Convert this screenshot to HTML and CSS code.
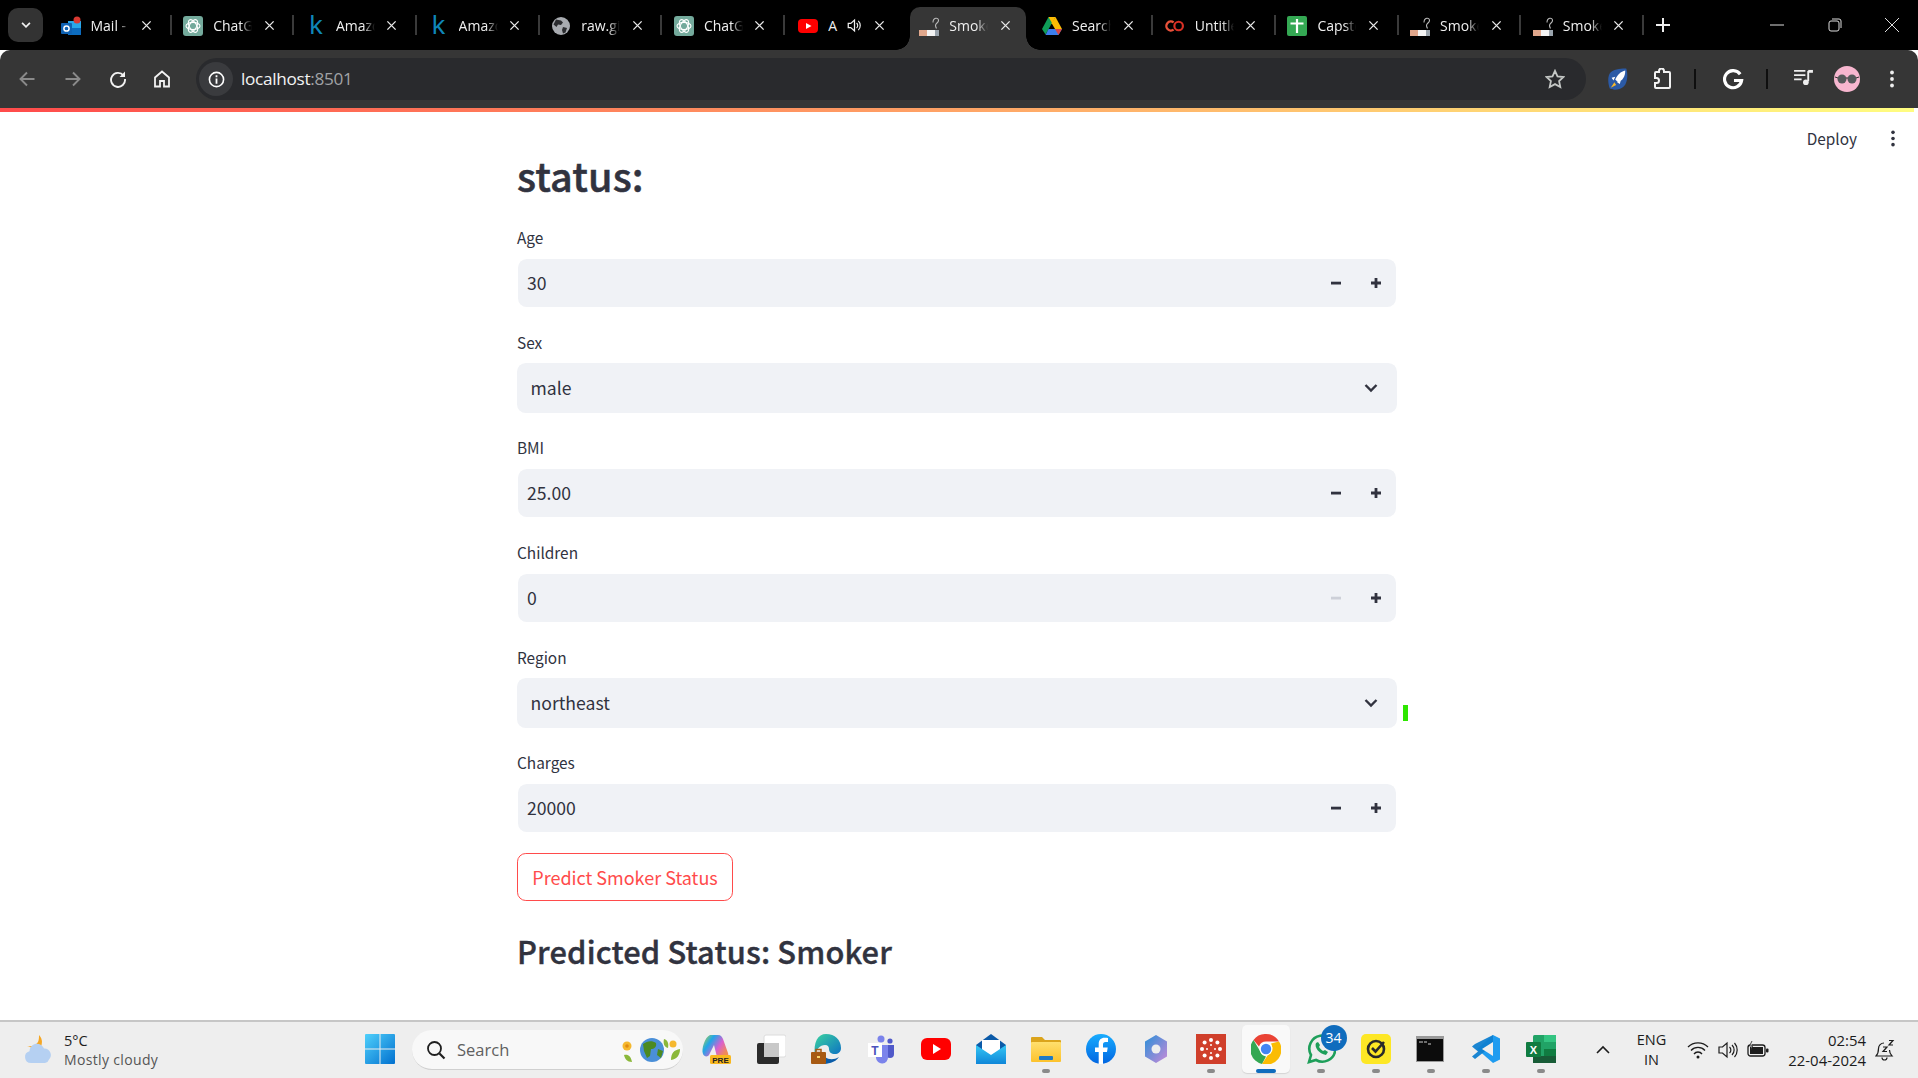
FILE: index.html
```html
<!DOCTYPE html>
<html lang="en">
<head>
<meta charset="utf-8">
<title>Smoker status</title>
<link rel="stylesheet" href="styles.css">
</head>
<body>
<svg class="defs" aria-hidden="true">
  <defs>
    <linearGradient id="winG" x1="0" y1="0" x2="1" y2="1"><stop offset="0" stop-color="#4fd0fb"/><stop offset="1" stop-color="#0270cf"/></linearGradient>
    <linearGradient id="edgeG" x1="0" y1="0" x2="1" y2="1"><stop offset="0" stop-color="#3ad3a0"/><stop offset="1" stop-color="#0c6fc4"/></linearGradient>
    <linearGradient id="mailG" x1="0" y1="0" x2="0" y2="1"><stop offset="0" stop-color="#35c8f5"/><stop offset="1" stop-color="#0f86d8"/></linearGradient>
    <linearGradient id="folderG" x1="0" y1="0" x2="0" y2="1"><stop offset="0" stop-color="#ffdf6e"/><stop offset="1" stop-color="#fcc22c"/></linearGradient>
    <linearGradient id="fbG" x1="0" y1="0" x2="0" y2="1"><stop offset="0" stop-color="#18acfe"/><stop offset="1" stop-color="#0165e1"/></linearGradient>
    <linearGradient id="coG" x1="0" y1="0" x2="1" y2="0.600"><stop offset="0" stop-color="#c4d832"/><stop offset=".35" stop-color="#1fa6e8"/><stop offset=".7" stop-color="#d95fd0"/><stop offset="1" stop-color="#f08a5a"/></linearGradient>
    <linearGradient id="m365G" x1="0" y1="0" x2="1" y2="1"><stop offset="0" stop-color="#2a8fd8"/><stop offset="1" stop-color="#c88ad8"/></linearGradient>
    <symbol id="i-close" viewBox="0 0 12 12"><path d="M1.5 1.5l9 9M10.500 1.500l-9 9" stroke="#e8e8e8" stroke-width="1.500" fill="none"/></symbol>
    <symbol id="i-outlook" viewBox="0 0 20 20"><rect x="7" y="5" width="13" height="14" fill="#28a8ea"/><rect x="7" y="12" width="13" height="7" fill="#0c6cbf"/><rect x="0" y="7" width="11" height="11" rx="1" fill="#0f62b3"/><circle cx="5.500" cy="12.500" r="2.600" fill="none" stroke="#fff" stroke-width="1.500"/><circle cx="16" cy="4" r="3.500" fill="#d93a32"/></symbol>
    <symbol id="i-gpt" viewBox="0 0 20 20"><rect width="20" height="20" rx="3" fill="#74aa9c"/><g fill="none" stroke="#fff" stroke-width="1.100"><ellipse cx="10" cy="10" rx="7" ry="3.600"/><ellipse cx="10" cy="10" rx="7" ry="3.600" transform="rotate(60 10 10)"/><ellipse cx="10" cy="10" rx="7" ry="3.600" transform="rotate(120 10 10)"/></g></symbol>
    <symbol id="i-globe" viewBox="0 0 20 20"><circle cx="10" cy="10" r="9" fill="#a8abb0"/><path d="M5 3.500l5 1 2 2-2 2.500-3-.5-1.500 2.500-3-2.500zM12 11l4 1-1.500 4.500-2.500 1-1-3.500z" fill="#2b2c2f"/></symbol>
    <symbol id="i-yt" viewBox="0 0 20 20"><rect y="3" width="20" height="14" rx="4" fill="#f00"/><path d="M8 7l5.500 3L8 13z" fill="#fff"/></symbol>
    <symbol id="i-speaker" viewBox="0 0 18 18"><path d="M1.500 6.500h3L9 2.500v13l-4.500-4h-3z" fill="none" stroke="#eee" stroke-width="1.500"/><path d="M11.500 6a4 4 0 010 6M13.500 3.500a7.500 7.500 0 010 11" fill="none" stroke="#eee" stroke-width="1.400"/></symbol>
    <symbol id="i-smoke" viewBox="0 0 20 20"><rect x="0" y="14" width="8" height="6" fill="#e0a78c"/><rect x="8" y="14" width="8" height="6" fill="#f3f3f3"/><rect x="16" y="14" width="4" height="6" fill="#9aa4ad"/><path d="M14 6.500c0-5 5.500-5.500 5.500-2 0 2.500-3 2.500-3 5 0 1 .500 2 1 3" fill="none" stroke="#b9b9b9" stroke-width="1.100"/></symbol>
    <symbol id="i-drive" viewBox="0 0 20 18"><path d="M6.500 0h7l-3.500 7-3.500-1z" fill="#fbbc04"/><path d="M6.500 0L0 12l3.500 5.500L10 6z" fill="#0f9d58"/><path d="M13.500 0L20 12h-7L9.500 6z" fill="#fbbc04"/><path d="M6.500 12H20l-3.500 6H3.500z" fill="#3d7fee"/><path d="M13 12h7l-3.500 6z" fill="#ea4335" opacity=".9"/></symbol>
    <symbol id="i-colab" viewBox="0 0 22 18"><path d="M9.500 5a5 5 0 100 8" fill="none" stroke="#e8513a" stroke-width="2.600"/><circle cx="15" cy="9" r="4.700" fill="none" stroke="#d93025" stroke-width="2.400"/></symbol>
    <symbol id="i-sheets" viewBox="0 0 20 20"><rect width="20" height="20" rx="2" fill="#34a853"/><path d="M3.500 7.500h13M10 3v14" stroke="#fff" stroke-width="2.200"/></symbol>
    <symbol id="i-more" viewBox="0 0 4 18"><circle cx="2" cy="2.500" r="1.900"/><circle cx="2" cy="9" r="1.900"/><circle cx="2" cy="15.500" r="1.900"/></symbol>
    <symbol id="i-minus" viewBox="0 0 12 12"><rect x="1" y="4.700" width="10" height="2.800"/></symbol>
    <symbol id="i-plus" viewBox="0 0 12 12"><path d="M1 6h10M6 1v10" stroke="currentColor" stroke-width="2.800" fill="none"/></symbol>
    <symbol id="i-chev" viewBox="0 0 14 10"><path d="M1.500 2l5.500 5.500L12.500 2" stroke="currentColor" stroke-width="2.400" fill="none"/></symbol>
    <symbol id="i-folder" viewBox="0 0 30 30"><path d="M0 4a1 1 0 011-1h10l3 3h15a1 1 0 011 1v5H0z" fill="#dba41c"/><rect y="8" width="30" height="20" rx="1" fill="url(#folderG)"/><rect x="8" y="22" width="14" height="4" rx="1" fill="#1f7ac4"/></symbol>
  </defs>
</svg>

<div class="page">
  <header class="tabstrip">
    <button class="tab-search"><svg class="ico10" viewBox="0 0 14 10"><use href="#i-chev"/></svg></button>
    <div class="tab sep"><svg class="fav"><use href="#i-outlook"/></svg><span class="tab-title">Mail - Outlook</span><svg class="tab-x"><use href="#i-close"/></svg></div>
    <div class="tab sep"><svg class="fav"><use href="#i-gpt"/></svg><span class="tab-title">ChatGPT</span><svg class="tab-x"><use href="#i-close"/></svg></div>
    <div class="tab sep"><span class="fav kaggle">k</span><span class="tab-title">Amazon</span><svg class="tab-x"><use href="#i-close"/></svg></div>
    <div class="tab sep"><span class="fav kaggle">k</span><span class="tab-title">Amazon</span><svg class="tab-x"><use href="#i-close"/></svg></div>
    <div class="tab sep"><svg class="fav"><use href="#i-globe"/></svg><span class="tab-title">raw.githubusercontent</span><svg class="tab-x"><use href="#i-close"/></svg></div>
    <div class="tab sep"><svg class="fav"><use href="#i-gpt"/></svg><span class="tab-title">ChatGPT</span><svg class="tab-x"><use href="#i-close"/></svg></div>
    <div class="tab tab-audio"><svg class="fav"><use href="#i-yt"/></svg><span class="tab-title tab-title-short">A</span><svg class="tab-sound"><use href="#i-speaker"/></svg><svg class="tab-x"><use href="#i-close"/></svg></div>
    <div class="tab active"><svg class="fav"><use href="#i-smoke"/></svg><span class="tab-title">Smoker</span><svg class="tab-x"><use href="#i-close"/></svg></div>
    <div class="tab sep"><svg class="fav"><use href="#i-drive"/></svg><span class="tab-title">Search</span><svg class="tab-x"><use href="#i-close"/></svg></div>
    <div class="tab sep"><svg class="fav"><use href="#i-colab"/></svg><span class="tab-title">Untitled</span><svg class="tab-x"><use href="#i-close"/></svg></div>
    <div class="tab sep"><svg class="fav"><use href="#i-sheets"/></svg><span class="tab-title">Capstone</span><svg class="tab-x"><use href="#i-close"/></svg></div>
    <div class="tab sep"><svg class="fav"><use href="#i-smoke"/></svg><span class="tab-title">Smoker</span><svg class="tab-x"><use href="#i-close"/></svg></div>
    <div class="tab sep"><svg class="fav"><use href="#i-smoke"/></svg><span class="tab-title">Smoker</span><svg class="tab-x"><use href="#i-close"/></svg></div>
    <svg class="newtab" viewBox="0 0 14 14"><path d="M7 0v14M0 7h14" stroke="#eee" stroke-width="2" fill="none"/></svg>
    <div class="win-controls">
      <svg class="win-btn" viewBox="0 0 14 14"><path d="M0 7h14" stroke="#ddd" fill="none"/></svg>
      <svg class="win-btn" viewBox="0 0 14 14"><rect x="1" y="3" width="10" height="10" rx="2" fill="none" stroke="#ddd"/><path d="M4 1h7a2 2 0 012 2v7" fill="none" stroke="#ddd"/></svg>
      <svg class="win-btn" viewBox="0 0 14 14"><path d="M0 0l14 14M14 0L0 14" stroke="#ddd" fill="none"/></svg>
    </div>
  </header>

  <nav class="toolbar">
    <svg class="tool t-back" viewBox="0 0 18 18"><path d="M16.500 9H2.500M9 2.500L2.500 9 9 15.500" fill="none" stroke="#8a8a8a" stroke-width="1.900"/></svg>
    <svg class="tool t-fwd" viewBox="0 0 18 18"><path d="M1.500 9h14M9 2.500L15.500 9 9 15.500" fill="none" stroke="#8a8a8a" stroke-width="1.900"/></svg>
    <svg class="tool t-reload" viewBox="0 0 18 18"><path d="M14.500 5.500A7 7 0 1016 9" fill="none" stroke="#f2f2f2" stroke-width="1.900"/><path d="M16 1.500v5.500h-5.500z" fill="#f2f2f2"/></svg>
    <svg class="tool t-home" viewBox="0 0 18 18"><path d="M9 1.500L2 7.500v9h5v-5.500h4v5.500h5v-9z" fill="none" stroke="#f2f2f2" stroke-width="1.800"/></svg>
    <div class="omnibox">
      <span class="chip"><svg viewBox="0 0 18 18" class="chip-ico"><circle cx="9" cy="9" r="7.500" fill="none" stroke="#fff" stroke-width="1.700"/><path d="M9 8v5.500M9 4.500v2" stroke="#fff" stroke-width="1.900"/></svg></span>
      <span class="url">localhost<span class="url-port">:8501</span></span>
      <svg class="star" viewBox="0 0 20 20"><path d="M10 1.800l2.500 5.500 6 .7-4.400 4.100 1.200 6L10 15.100l-5.300 3 1.200-6L1.500 8l6-.7z" fill="none" stroke="#c4c7c5" stroke-width="1.800"/></svg>
    </div>
    <svg class="tool t-rocket" viewBox="0 0 22 24"><path d="M3 4c5-4 13-4 17-4 2 4 2 16-3 20-4 4-12 4-15 2C0 17-1 8 3 4z" fill="#2b5aa6"/><path d="M19 2c-5 1-9 5-11 10l3 3c5-2 8-6 8-13z" fill="#fff"/><path d="M8 9l-4 1 2 3zM14 13l-1 4-3-2z" fill="#fff"/><path d="M7 15l-4 6 6-3z" fill="#f5b82e"/></svg>
    <svg class="tool t-puzzle" viewBox="0 0 20 22"><path d="M7 4V3a2.500 2.500 0 015 0v1h5a1 1 0 011 1v14a1 1 0 01-1 1H4a1 1 0 01-1-1v-4h1.500a2.500 2.500 0 000-5H3V5a1 1 0 011-1z" fill="none" stroke="#f2f2f2" stroke-width="2"/></svg>
    <span class="tool-sep sep-a"></span>
    <svg class="tool t-g" viewBox="0 0 22 22"><path d="M18 5.500A9 9 0 1019.500 12H11.500" fill="none" stroke="#fff" stroke-width="3.300"/></svg>
    <span class="tool-sep sep-b"></span>
    <svg class="tool t-media" viewBox="0 0 20 18"><path d="M0 2h12M0 6.500h12M0 11h8" stroke="#eee" stroke-width="1.900" fill="none"/><path d="M15 2v11" stroke="#eee" stroke-width="2"/><path d="M15 1h5v3h-5z" fill="#eee"/><circle cx="12.500" cy="14" r="3" fill="#eee"/></svg>
    <svg class="t-avatar" viewBox="0 0 26 26"><circle cx="13" cy="13" r="13" fill="#f7b6cf"/><circle cx="8" cy="13" r="4.500" fill="#55585a"/><circle cx="18" cy="13" r="4.500" fill="#55585a"/><path d="M1 11l3 1M25 11l-3 1M12 12h2" stroke="#333" stroke-width="1"/></svg>
    <svg class="tool t-more" viewBox="0 0 4 18" fill="#eee"><use href="#i-more"/></svg>
  </nav>

  <main class="app">
    <div class="app-deco"></div>
    <div class="app-menu">
      <span class="deploy">Deploy</span>
      <svg class="app-more" viewBox="0 0 4 18" fill="#31333f"><use href="#i-more"/></svg>
    </div>
    <span class="resize-mark"></span>
    <section class="col">
      <h2 class="title">status:</h2>

      <div class="field"><label class="lbl">Age</label>
        <div class="ctl"><div class="num"><span class="val">30</span><span class="step"><svg class="ico12"><use href="#i-minus"/></svg></span><span class="step"><svg class="ico12"><use href="#i-plus"/></svg></span></div></div></div>

      <div class="field"><label class="lbl">Sex</label>
        <div class="ctl"><div class="sel"><span class="val">male</span><svg class="chev"><use href="#i-chev"/></svg></div></div></div>

      <div class="field"><label class="lbl">BMI</label>
        <div class="ctl"><div class="num"><span class="val">25.00</span><span class="step"><svg class="ico12"><use href="#i-minus"/></svg></span><span class="step"><svg class="ico12"><use href="#i-plus"/></svg></span></div></div></div>

      <div class="field"><label class="lbl">Children</label>
        <div class="ctl"><div class="num"><span class="val">0</span><span class="step off"><svg class="ico12"><use href="#i-minus"/></svg></span><span class="step"><svg class="ico12"><use href="#i-plus"/></svg></span></div></div></div>

      <div class="field"><label class="lbl">Region</label>
        <div class="ctl"><div class="sel"><span class="val">northeast</span><svg class="chev"><use href="#i-chev"/></svg></div></div></div>

      <div class="field"><label class="lbl">Charges</label>
        <div class="ctl"><div class="num"><span class="val">20000</span><span class="step"><svg class="ico12"><use href="#i-minus"/></svg></span><span class="step"><svg class="ico12"><use href="#i-plus"/></svg></span></div></div></div>

      <button class="predict">Predict Smoker Status</button>
      <h3 class="result">Predicted Status: Smoker</h3>
    </section>
  </main>

  <footer class="taskbar">
    <div class="weather">
      <svg class="wx" viewBox="0 0 32 32"><path d="M15 1a10 10 0 01-1 15L3 12c5 1 9-1 11-4 1-2 1-5 1-7z" fill="#f5a623"/><path d="M7 29a6 6 0 01-1.500-11.800A7.500 7.500 0 0120 14.500a6.500 6.500 0 015 11 5 5 0 01-4 3.500z" fill="#b5d0f2"/></svg>
      <div class="wx-text"><span class="wx-temp">5°C</span><span class="wx-desc">Mostly cloudy</span></div>
    </div>
    <div class="tb"><svg class="tbi" viewBox="0 0 30 30"><path d="M0 1a1 1 0 011-1h13.500v14.500H0zM15.500 0H29a1 1 0 011 1v13.500H15.500zM0 15.500h14.500V30H1a1 1 0 01-1-1zM15.500 15.500H30V29a1 1 0 01-1 1H15.500z" fill="url(#winG)"/></svg></div>
    <div class="searchbox">
      <svg class="sb-glass" viewBox="0 0 20 20"><circle cx="8.500" cy="8.500" r="6.500" fill="none" stroke="#1f1f1f" stroke-width="1.800"/><path d="M13.500 13.500l5 5" stroke="#1f1f1f" stroke-width="2.200"/></svg>
      <span class="sb-text">Search</span>
      <svg class="sb-art" viewBox="0 0 60 30"><circle cx="31" cy="15" r="12" fill="#4a8fd8"/><path d="M22 9c4-3 9-4 13-1 1 4-2 6-5 6l-1 7-3 2-3-7zM37 14l5 2-2 7-4-3z" fill="#4c8a22"/><circle cx="6" cy="11" r="4.500" fill="#f5b82e"/><circle cx="6" cy="11" r="1.800" fill="#e08a12"/><path d="M3 20c4-1 7 1 8 7-5 0-7-3-8-7zM43 4c4 1 5 5 4 9-4-1-5-5-4-9zM50 25c0-7 3-10 9-11 0 6-3 10-9 11z" fill="#8bb83a"/><circle cx="52" cy="9" r="3.500" fill="#f5b82e"/></svg>
    </div>
    <div class="tb"><svg class="tbi" viewBox="0 0 30 30"><path d="M9 1h8c3 0 4 2 5 4l5 14c1 3-1 4-3 4H16l-3-12-5 10c-1 2-5 2-6-1C0 15 4 3 9 1z" fill="url(#coG)"/><rect x="9" y="21" width="21" height="9" rx="1.500" fill="#f9b81f"/><text x="19.500" y="28.500" class="pre">PRE</text></svg></div>
    <div class="tb"><svg class="tbi" viewBox="0 0 30 30"><rect x="8" y="1" width="22" height="22" rx="2" fill="#fff" stroke="#dcdcdc"/><rect x="1" y="9" width="22" height="21" rx="2" fill="#2b2b2b"/><rect x="8" y="9" width="15" height="14" fill="#c8c8c8"/></svg></div>
    <div class="tb"><svg class="tbi" viewBox="0 0 30 30"><path d="M15 0c9 0 15 6 15 14 0 4-3 6-6 6-4 0-6-2-6-5 0-2-1-4-4-4-5 0-9 4-10 11C2 8 7 0 15 0z" fill="url(#edgeG)"/><path d="M12 30c4 0 12-1 16-7-5 3-10 3-14 0z" fill="#0a5ca8"/><rect y="18" width="15" height="12" rx="1" fill="#a75a13"/><rect x="5" y="15.500" width="5" height="3" fill="none" stroke="#a75a13" stroke-width="1.500"/><rect x="6" y="22" width="3" height="2" fill="#f8d36a"/></svg></div>
    <div class="tb"><svg class="tbi" viewBox="0 0 30 30"><circle cx="15" cy="5" r="3.500" fill="#7b83eb"/><circle cx="24" cy="7" r="2.600" fill="#5059c9"/><path d="M20 11h8v9a4 4 0 01-8 0z" fill="#5059c9"/><path d="M9 11h13v12a6 6 0 01-12 1z" fill="#7b83eb"/><rect x="2" y="9" width="14" height="14" fill="#fff"/><text x="9" y="20.500" class="teams">T</text></svg></div>
    <div class="tb"><svg class="tbi" viewBox="0 0 30 30"><rect y="4" width="30" height="22" rx="6" fill="#f00"/><path d="M12 10l8 5-8 5z" fill="#fff"/></svg></div>
    <div class="tb"><svg class="tbi" viewBox="0 0 30 30"><path d="M15 0L30 11v5H0v-5z" fill="#0b5aa8"/><path d="M6 6h18v10l-9 5-9-5z" fill="#fff"/><path d="M0 11l15 10 15-10v19H0z" fill="url(#mailG)"/></svg></div>
    <div class="tb run"><svg class="tbi"><use href="#i-folder"/></svg></div>
    <div class="tb"><svg class="tbi" viewBox="0 0 30 30"><circle cx="15" cy="15" r="15" fill="url(#fbG)"/><path d="M17 30V18h4l.7-4.500H17v-3c0-1.500.7-2.500 2.500-2.500H22V4c-1-.2-2.300-.3-3.500-.3-3.500 0-5.800 2.200-5.800 6v3.800H9V18h3.700v12z" fill="#fff"/></svg></div>
    <div class="tb"><svg class="tbi" viewBox="0 0 30 30"><path d="M15 1l11 6.500v15L15 29 4 22.500v-15z" fill="url(#m365G)"/><circle cx="15" cy="15" r="4.500" fill="#eee"/></svg></div>
    <div class="tb run"><svg class="tbi" viewBox="0 0 30 30"><rect width="30" height="30" fill="#d03f2b"/><g fill="#fff"><circle cx="15" cy="6" r="2"/><circle cx="15" cy="24" r="2"/><circle cx="6" cy="15" r="2"/><circle cx="24" cy="15" r="2"/><circle cx="8.600" cy="8.600" r="2"/><circle cx="21.400" cy="8.600" r="2"/><circle cx="8.600" cy="21.400" r="2"/><circle cx="21.400" cy="21.400" r="2"/><circle cx="15" cy="11" r="1"/><circle cx="15" cy="19" r="1"/><circle cx="11" cy="15" r="1"/><circle cx="19" cy="15" r="1"/></g></svg></div>
    <div class="tb run active-app"><svg class="tbi" viewBox="0 0 30 30"><path d="M15 0a15 15 0 0113 7.500H15a7.500 7.500 0 00-7 5L2.500 6A15 15 0 0115 0z" fill="#ea4335"/><path d="M2.500 6L9 17a7.500 7.500 0 006 5.500L11 30A15 15 0 012.500 6z" fill="#34a853"/><path d="M28 7.500A15 15 0 0111 30l6.500-10A7.500 7.500 0 0020 9.500z" fill="#fbbc04"/><circle cx="15" cy="15" r="6.500" fill="#fff"/><circle cx="15" cy="15" r="5.200" fill="#4285f4"/></svg></div>
    <div class="tb run"><svg class="tbi" viewBox="0 0 30 30"><path d="M3 28l2-7A13 13 0 1110 26z" fill="none" stroke="#1e9f5a" stroke-width="2.600"/><path d="M10 9c-2 4 3 11 10 12l2-3-3-2-2 1c-2-1-3-3-4-4l1-2-2-3z" fill="#1e9f5a"/></svg><span class="badge">34</span></div>
    <div class="tb run"><svg class="tbi" viewBox="0 0 30 30"><rect width="30" height="30" rx="5" fill="#fde725"/><circle cx="15" cy="15" r="8" fill="none" stroke="#2a2a2a" stroke-width="2.600"/><path d="M11 14l3.500 3.500L23 8" fill="none" stroke="#2a2a2a" stroke-width="2.600"/></svg></div>
    <div class="tb run"><svg class="tbi" viewBox="0 0 30 30"><rect y="2" width="28" height="26" fill="#9a9a9a"/><rect x="1" y="5" width="26" height="22" fill="#0c0c0c"/><path d="M3 8h4M8 8h3M12 10h3" stroke="#cfcfcf" fill="none"/></svg></div>
    <div class="tb run"><svg class="tbi" viewBox="0 0 30 30"><path d="M22 1l7 3.500v21L22 29 6 15z" fill="#1f9cf0"/><path d="M4 10L1 12.500l6 5-6 5L4 25l18-14V1z" fill="#0f7fd0" opacity=".95"/><path d="M22 8v14L11 15z" fill="#eeeeee"/></svg></div>
    <div class="tb run"><svg class="tbi" viewBox="0 0 30 30"><rect x="7" y="1" width="23" height="28" rx="1.500" fill="#21a366"/><rect x="18" y="1" width="12" height="7" fill="#33c481"/><rect x="18" y="15" width="12" height="7" fill="#107c41"/><rect x="7" y="22" width="23" height="7" fill="#185c37"/><rect x="0" y="8" width="15" height="15" rx="1" fill="#107c41"/><text x="7.500" y="19.500" class="xl">X</text></svg></div>
    <svg class="tray-chev" viewBox="0 0 14 10"><path d="M1 8l6-6 6 6" fill="none" stroke="#1c1c1c" stroke-width="1.600"/></svg>
    <div class="lang"><span>ENG</span><span>IN</span></div>
    <svg class="t-wifi" viewBox="0 0 22 18"><path d="M1 6a14 14 0 0120 0M4 9.500a9.500 9.500 0 0114 0M7 13a5 5 0 018 0" fill="none" stroke="#1c1c1c" stroke-width="1.300"/><circle cx="11" cy="16" r="1.500" fill="#1c1c1c"/></svg>
    <svg class="t-vol" viewBox="0 0 20 18"><path d="M1 6h3.500L9 2v14l-4.500-4H1z" fill="none" stroke="#1c1c1c" stroke-width="1.200"/><path d="M11.500 6a4 4 0 010 6M14 4a7 7 0 010 10M16.500 2a10.500 10.500 0 010 14" fill="none" stroke="#1c1c1c" stroke-width="1.200"/></svg>
    <svg class="t-bat" viewBox="0 0 22 18"><rect x="1" y="4" width="17" height="11" rx="2.500" fill="none" stroke="#1c1c1c" stroke-width="1.300"/><rect x="3" y="6" width="13" height="7" fill="#1c1c1c"/><rect x="19" y="7.500" width="2.500" height="4" rx="1" fill="#1c1c1c"/><path d="M5 0L2.500 5h3L4 9" fill="#eee" stroke="#1c1c1c" stroke-width=".8"/></svg>
    <div class="clock"><span>02:54</span><span>22-04-2024</span></div>
    <svg class="t-bell" viewBox="0 0 20 22"><path d="M9 4a5.500 5.500 0 00-5.500 5.500c0 4-1 6-2.500 7.500h16c-1.500-1.500-2.500-3-2.500-6" fill="none" stroke="#1c1c1c" stroke-width="1.200"/><path d="M7 18.500a2.500 2.500 0 005 0" fill="none" stroke="#1c1c1c" stroke-width="1.200"/><path d="M8 8h4l-4 4.500h4M14 1.500h4l-4 4.500h4" fill="none" stroke="#1c1c1c" stroke-width="1.200"/></svg>
  </footer>
</div>
</body>
</html>
```
FILE: styles.css
```css
* { box-sizing: border-box; }
html, body { margin: 0; padding: 0; height: 100%; overflow: hidden; background: #fff; }
.defs { display: block; width: 0; height: 0; overflow: hidden; }
.page { display: flex; flex-direction: column; width: 1918px; height: 1078px; }

/* tab strip */
.tabstrip { display: flex; align-items: flex-end; height: 50px; background: #000; flex: none; font-family: "Open Sans", "Noto Sans", sans-serif; color: #f0f0f0; }
.tab-search { align-self: flex-start; width: 35px; height: 34px; margin: 8px 5px 0 8px; padding: 0; border: 0; border-radius: 10px; background: #333; color: #f0f0f0; display: flex; align-items: center; justify-content: center; }
.ico10 { width: 10px; height: 8px; color: #f0f0f0; }
.tab { position: relative; width: 122.7px; height: 43px; padding: 0 0 6px 12.500px; display: flex; align-items: center; flex: none; }
.tab.sep::after { content: ""; position: absolute; right: -1px; top: 8px; width: 2px; height: 20px; background: #3a3a3a; }
.tab.active { background: #363636; border-radius: 10px 10px 0 0; margin: 0 3.500px; width: 115.7px; padding-left: 9px; }
.tab.active::before, .tab.active::after { content: ""; position: absolute; bottom: 0; width: 14px; height: 14px; }
.tab.active::before { left: -14px; background: radial-gradient(circle at 0 0, #000 13.500px, #363636 14px); }
.tab.active::after { right: -14px; background: radial-gradient(circle at 100% 0, #000 13.500px, #363636 14px); }
.fav { width: 20px; height: 20px; flex: none; }
.kaggle { color: #0f86b8; font: 400 26px/20px "Noto Sans", sans-serif; text-align: center; margin-top: -3px; }
.tab-title { width: 39px; margin-left: 10px; font-size: 14px; line-height: 20px; white-space: nowrap; overflow: hidden; -webkit-mask-image: linear-gradient(90deg, #000 70%, transparent); mask-image: linear-gradient(90deg, #000 70%, transparent); flex: none; }
.tab-title-short { width: 10px; -webkit-mask-image: none; mask-image: none; }
.tab-audio { padding-left: 14px; }
.tab-sound { width: 15px; height: 15px; margin-left: 9px; flex: none; }
.tab-audio .tab-x { margin-left: 12px; }
.tab-x { width: 11px; height: 11px; margin-left: 11.500px; flex: none; }
.newtab { width: 14px; height: 14px; align-self: flex-start; margin: 18px 0 0 13px; flex: none; }
.win-controls { display: flex; margin-left: auto; align-self: flex-start; margin-top: 18px; padding-right: 19px; gap: 43.500px; }
.win-btn { width: 14px; height: 14px; }

/* toolbar */
.toolbar { display: flex; align-items: center; height: 58px; background: #363636; border-radius: 10px 10px 0 0; flex: none; padding-left: 18px; }
.tool { flex: none; display: block; }
.t-back { width: 18px; height: 18px; }
.t-fwd { width: 18px; height: 18px; margin-left: 28px; }
.t-reload { width: 18px; height: 18px; margin-left: 27px; }
.t-home { width: 18px; height: 18px; margin-left: 26px; }
.omnibox { display: flex; align-items: center; width: 1390px; height: 42px; margin-left: 25px; padding-left: 3px; border-radius: 21px; background: #292a2d; flex: none; }
.chip { display: flex; align-items: center; justify-content: center; width: 34px; height: 34px; border-radius: 50%; background: #3a3b3e; flex: none; }
.chip-ico { width: 17px; height: 17px; }
.url { margin-left: 8px; color: #f3f3f3; font: 400 17.200px/24px "Open Sans", "Noto Sans", sans-serif; letter-spacing: -.3px; }
.url-port { color: #a0a2a5; }
.star { width: 20px; height: 20px; margin-left: auto; margin-right: 21px; }
.t-rocket { width: 20px; height: 23px; margin-left: 22px; }
.t-puzzle { width: 20px; height: 22px; margin-left: 24px; }
.tool-sep { width: 2px; height: 20px; background: #0f0f0f; flex: none; }
.sep-a { margin-left: 22px; }
.t-g { width: 21px; height: 21px; margin-left: 27px; }
.sep-b { margin-left: 22px; }
.t-media { width: 19px; height: 17px; margin-left: 25.500px; margin-top: -4px; }
.t-avatar { width: 26px; height: 26px; margin-left: 21.500px; flex: none; }
.t-more { width: 4px; height: 18px; margin-left: 30px; }

/* app */
.app { position: relative; flex: 1; min-height: 0; padding-right: 4px; font-family: "Noto Sans CJK SC", "Noto Sans", sans-serif; color: #31333f; }
.app-deco { height: 4px; background: linear-gradient(90deg, #ff4b4b, #fffd80); }
.app-menu { position: absolute; top: 18px; right: 0; display: flex; align-items: center; height: 24px; padding-right: 23px; }
.deploy { font-size: 15.400px; line-height: 24px; }
.app-more { width: 4px; height: 17px; margin-left: 34px; }
.resize-mark { position: absolute; left: 1403px; top: 597px; width: 5px; height: 16px; background: #2ee600; }
.col { width: 880px; margin: 0 auto; }
.title { margin: 0; padding-top: 38px; height: 115px; font-size: 39.600px; line-height: 50px; font-weight: 500; -webkit-text-stroke: .5px #31333f; letter-spacing: .1px; }
.field { margin-bottom: 24px; }
.lbl { display: block; height: 21px; margin-bottom: 10px; font-size: 15.400px; line-height: 21px; }
.ctl { height: 50px; display: flow-root; }
.num, .sel { display: flex; align-items: center; background: #f0f2f6; border-radius: 8.800px; font-size: 17.600px; }
.num { height: 48px; margin: 1px; padding-left: 9px; }
.sel { height: 50px; padding-left: 13.500px; }
.val { flex: 1; line-height: 26px; }
.step { width: 40px; display: flex; justify-content: center; color: #31333f; fill: #31333f; }
.step.off { color: #cdd0d8; fill: #cdd0d8; }
.ico12 { width: 12px; height: 12px; }
.chev { width: 14px; height: 10px; margin-right: 19px; color: #31333f; }
.predict { display: block; width: 216px; height: 48px; margin: -4px 0 0; padding: 0; border: 1px solid #ff4b4b; border-radius: 8.800px; background: #fff; color: #ff4b4b; font: 400 18px/26px "Noto Sans CJK SC", "Noto Sans", sans-serif; }
.result { margin: 27.500px 0 0; font-size: 30.800px; line-height: 44px; font-weight: 500; -webkit-text-stroke: .4px #31333f; letter-spacing: .15px; }

/* taskbar */
.taskbar { display: flex; align-items: center; height: 58px; flex: none; background: #eeeeee; border-top: 2px solid #c6c6c6; font-family: "Open Sans", "Noto Sans", sans-serif; color: #1c1c1c; }
.weather { display: flex; align-items: center; width: 352px; height: 100%; padding-left: 24px; flex: none; }
.wx { width: 32px; height: 32px; flex: none; }
.wx-text { display: flex; flex-direction: column; margin-left: 8px; }
.wx-temp { font-size: 14.500px; line-height: 19px; }
.wx-desc { font-size: 14px; line-height: 19px; color: #555; letter-spacing: .35px; }
.tb { position: relative; display: flex; align-items: center; justify-content: center; width: 55px; height: 48px; flex: none; margin-top: -2px; }
.tbi { width: 30px; height: 30px; display: block; }
.run::after { content: ""; position: absolute; left: 50%; bottom: 0; width: 8px; height: 4px; margin-left: -4px; border-radius: 2px; background: #8a8a8a; }
.active-app { background: #f9f9f9; border-radius: 5px; width: 48px; margin: -2px 3.500px 0; box-shadow: 0 1px 1px #d4d4d4; }
.active-app::after { width: 20px; margin-left: -10px; background: #0f6cbd; bottom: 0; }
.badge { position: absolute; top: 0; right: 2px; width: 26px; height: 26px; border-radius: 50%; background: #0f6cbd; color: #fff; font-size: 14px; line-height: 26px; text-align: center; }
.searchbox { display: flex; align-items: center; width: 271px; height: 40px; margin: 0 5.500px 0 5px; padding-left: 14px; border-radius: 20px; background: #f8f8f8; border-bottom: 1px solid #d0d0d0; flex: none; }
.sb-glass { width: 20px; height: 20px; flex: none; }
.sb-text { margin-left: 11px; font-size: 16.500px; color: #606060; line-height: 22px; }
.sb-art { width: 60px; height: 30px; margin-left: auto; margin-right: 2px; }
.pre { font: 700 8px "Liberation Sans", sans-serif; text-anchor: middle; fill: #222; }
.teams { font: 700 12px "Liberation Sans", sans-serif; text-anchor: middle; fill: #4b53bc; }
.xl { font: 700 11px "Liberation Sans", sans-serif; text-anchor: middle; fill: #fff; }
.tray-chev { width: 14px; height: 10px; margin-left: 27px; flex: none; }
.lang { display: flex; flex-direction: column; align-items: center; width: 40px; margin-left: 22px; font-size: 14.500px; line-height: 20px; flex: none; }
.t-wifi { width: 22px; height: 18px; margin-left: 15px; flex: none; }
.t-vol { width: 20px; height: 18px; margin-left: 9px; flex: none; }
.t-bat { width: 22px; height: 18px; margin-left: 9px; flex: none; }
.clock { display: flex; flex-direction: column; align-items: flex-end; width: 90px; margin-left: 7.500px; font-size: 14.900px; line-height: 20px; flex: none; }
.t-bell { width: 20px; height: 22px; margin-left: 9px; flex: none; }
```
